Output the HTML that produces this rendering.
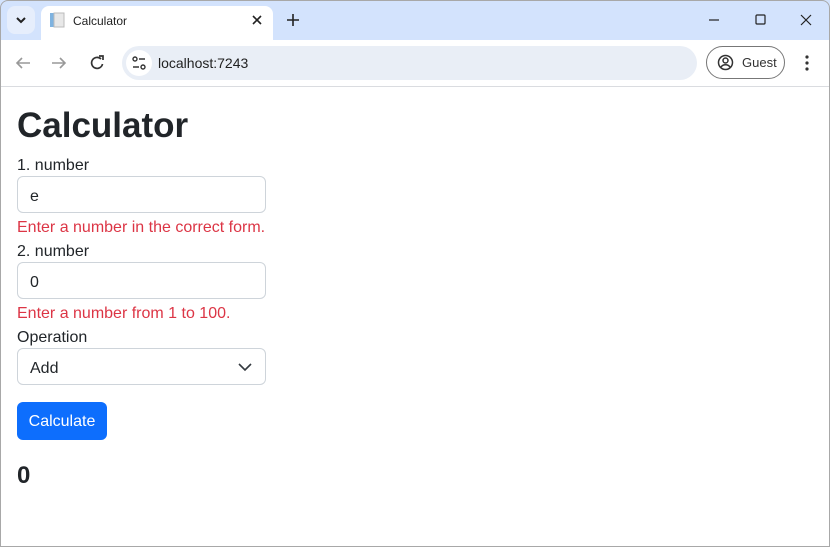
<!DOCTYPE html>
<html><head><style>
*{box-sizing:border-box;margin:0;padding:0}
body{width:830px;height:547px;overflow:hidden;background:#fff;font-family:"Liberation Sans",sans-serif;position:relative}
.a{position:absolute}
.frame{left:0;top:0;width:830px;height:547px;border:1px solid #a8a8a8;border-radius:8px 8px 0 0;pointer-events:none}
.lbl{left:17px;font-size:16px;color:#212529}
.inp{left:17px;width:249px;height:37px;border:1px solid #ced4da;border-radius:6px;font-size:16px;color:#212529;padding:10px 12px 0;line-height:19px}
.err{left:17px;font-size:16px;color:#dc3545}
</style></head><body>
<div class="a" style="left:0;top:0;width:830px;height:40px;background:#d3e3fd"></div>
<div class="a" style="left:7px;top:6px;width:28px;height:28px;background:#e6eefc;border-radius:8px"></div>
<svg class="a" style="left:14px;top:14px" width="14" height="12"><path d="M3 4l4 4 4-4" fill="none" stroke="#222" stroke-width="2"/></svg>
<div class="a" style="left:41px;top:6px;width:232px;height:34px;background:#fff;border-radius:8px 8px 0 0"></div>
<svg class="a" style="left:49px;top:12px" width="16" height="16"><rect x="1" y="1" width="4" height="14" fill="#7fb3e0"/><rect x="5" y="1" width="10" height="14" fill="#e8e8e8" stroke="#bbb"/></svg>
<div class="a" style="left:73px;top:14px;font-size:12px;color:#222">Calculator</div>
<svg class="a" style="left:251px;top:14px" width="12" height="12"><path d="M2 2l8 8M10 2l-8 8" stroke="#222" stroke-width="1.6"/></svg>
<svg class="a" style="left:286px;top:13px" width="14" height="14"><path d="M7 1v12M1 7h12" stroke="#222" stroke-width="1.6"/></svg>
<svg class="a" style="left:708px;top:14px" width="110" height="12"><path d="M1 6h10" stroke="#222" stroke-width="1.2"/><rect x="48" y="1" width="9" height="9" rx="1" fill="none" stroke="#222" stroke-width="1.2"/><path d="M93 1l10 10M103 1l-10 10" stroke="#222" stroke-width="1.2"/></svg>
<div class="a" style="left:0;top:86px;width:830px;height:1px;background:#dadce0"></div>
<svg class="a" style="left:14px;top:54px" width="100" height="18"><path d="M16 9H3M8 4L3 9l5 5" fill="none" stroke="#999" stroke-width="1.6"/><path d="M38 9h13M46 4l5 5-5 5" fill="none" stroke="#999" stroke-width="1.6"/><path d="M87 5a5.5 5.5 0 1 0 1.5 5" fill="none" stroke="#333" stroke-width="1.7"/><path d="M85 2h4v4" fill="none" stroke="#333" stroke-width="1.7"/></svg>
<div class="a" style="left:122px;top:46px;width:575px;height:34px;background:#e9eef6;border-radius:17px"></div>
<div class="a" style="left:126px;top:50px;width:26px;height:26px;background:#fff;border-radius:13px"></div>
<svg class="a" style="left:131px;top:55px" width="16" height="16"><circle cx="4" cy="4" r="2" fill="none" stroke="#333" stroke-width="1.4"/><path d="M8 4h6M2 12h6" stroke="#333" stroke-width="1.4"/><circle cx="12" cy="12" r="2" fill="none" stroke="#333" stroke-width="1.4"/></svg>
<div class="a" style="left:158px;top:55px;font-size:14px;color:#222">localhost:7243</div>
<div class="a" style="left:706px;top:46px;width:79px;height:33px;border:1px solid #777;border-radius:17px"></div>
<svg class="a" style="left:717px;top:54px" width="17" height="17"><circle cx="8.5" cy="8.5" r="7" fill="none" stroke="#333" stroke-width="1.5"/><circle cx="8.5" cy="6.5" r="2.5" fill="none" stroke="#333" stroke-width="1.5"/><path d="M4 13c2-3 7-3 9 0" fill="none" stroke="#333" stroke-width="1.5"/></svg>
<div class="a" style="left:742px;top:55px;font-size:13px;color:#333">Guest</div>
<svg class="a" style="left:804px;top:54px" width="6" height="18"><circle cx="3" cy="3" r="1.6" fill="#333"/><circle cx="3" cy="9" r="1.6" fill="#333"/><circle cx="3" cy="15" r="1.6" fill="#333"/></svg>

<div class="a" style="left:17px;top:106px;font-size:35px;font-weight:bold;color:#212529">Calculator</div>
<div class="a lbl" style="top:157px">1. number</div>
<div class="a inp" style="top:176px">e</div>
<div class="a err" style="top:219px">Enter a number in the correct form.</div>
<div class="a lbl" style="top:243px">2. number</div>
<div class="a inp" style="top:262px">0</div>
<div class="a err" style="top:305px">Enter a number from 1 to 100.</div>
<div class="a lbl" style="top:329px">Operation</div>
<div class="a inp" style="top:348px">Add</div>
<svg class="a" style="left:238px;top:362px" width="14" height="10"><path d="M1 2l6 6 6-6" fill="none" stroke="#343a40" stroke-width="1.6"/></svg>
<div class="a" style="left:17px;top:402px;width:90px;height:38px;background:#0d6efd;border-radius:6px;color:#fff;font-size:16px;line-height:40px;text-align:center">Calculate</div>
<div class="a" style="left:17px;top:462px;font-size:24px;font-weight:bold;color:#212529">0</div>
<div class="a frame"></div>
</body></html>
